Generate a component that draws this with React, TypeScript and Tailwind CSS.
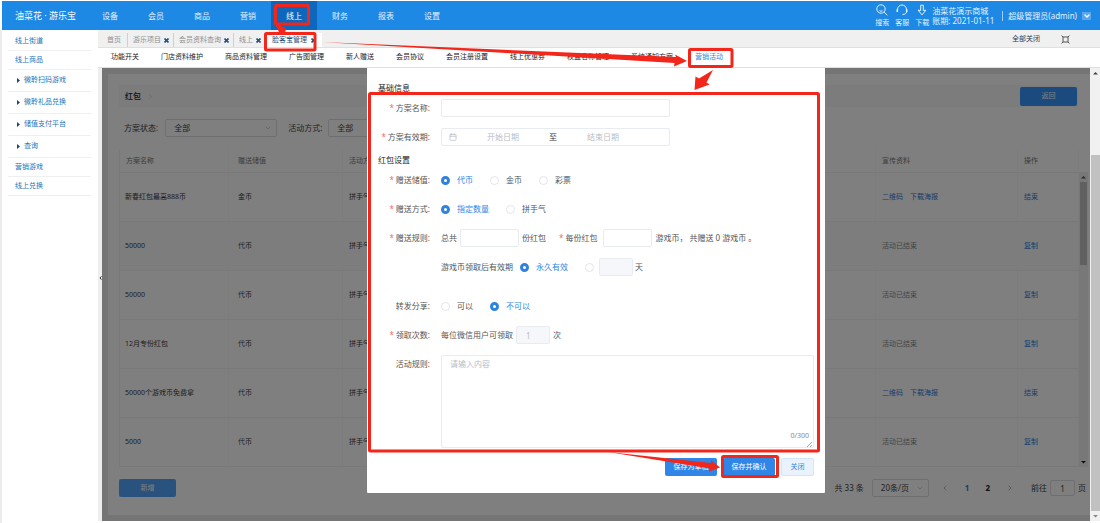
import { ReactNode } from "react";
import { ChevronDown, ChevronLeft, ChevronRight, Calendar } from "lucide-react";

const navItems = ["设备", "会员", "商品", "营销", "线上", "财务", "报表", "设置"];

const sideItems = [
  { label: "线上街道", sub: false },
  { label: "线上商品", sub: false },
  { label: "微聆扫码游戏", sub: true },
  { label: "微聆礼品兑换", sub: true },
  { label: "储值支付平台", sub: true },
  { label: "查询", sub: true },
  { label: "营销游戏", sub: false },
  { label: "线上兑换", sub: false },
];

const tabs = ["首页", "游乐项目", "会员资料查询", "线上", "脸客宝管理"];

const subNav = [
  "功能开关", "门店资料维护", "商品资料管理", "广告图管理", "新人赠送", "会员协议",
  "会员注册设置", "线上优惠券", "权益名称管理", "系统通知方案", "营销活动",
];

const rows = [
  { name: "新春红包最高888币", value: "金币", active: true },
  { name: "50000", value: "代币", active: false },
  { name: "50000", value: "代币", active: false },
  { name: "12月专份红包", value: "代币", active: false },
  { name: "50000个游戏币免费拿", value: "代币", active: true },
  { name: "5000", value: "代币", active: false },
];

function Header() {
  return (
    <header className="ml-[2px] mt-px flex h-[29px] items-stretch bg-[#1e88e5] text-[8px] text-[#e3f1fd]">
      <div className="flex w-[85px] items-center whitespace-nowrap pl-[13px] text-[9px] text-white">油菜花 · 游乐宝</div>
      <nav className="flex">
        {navItems.map((n) => (
          <a
            key={n}
            href="#"
            className={
              n === "线上"
                ? "flex w-[46px] items-center justify-center bg-[#0d68bd] text-white"
                : "flex w-[46px] items-center justify-center"
            }
          >
            {n}
          </a>
        ))}
      </nav>
      <div className="ml-auto flex items-center whitespace-nowrap pr-[9px]">
        <div className="flex gap-[6px] text-[7px] leading-[8px]">
          <a href="#" className="flex flex-col items-center gap-[3px]">
            <svg width="12" height="12" viewBox="0 0 12 12" fill="none" stroke="currentColor">
              <circle cx="5" cy="5" r="4.2" />
              <path d="M8.2 8.2 11.3 11.3M3.5 6.7Q5 7.8 6.5 6.7" />
            </svg>
            搜索
          </a>
          <a href="#" className="flex flex-col items-center gap-[3px]">
            <svg width="12" height="12" viewBox="0 0 12 12" fill="none" stroke="currentColor">
              <path d="M1.5 7.5V5.5a4.5 4.5 0 0 1 9 0v2M10.5 7.5c0 2-1.5 3-4 3" />
              <path d="M1.3 5.2v2.8M10.7 5.2v2.8" strokeWidth="1.6" />
            </svg>
            客服
          </a>
          <a href="#" className="flex flex-col items-center gap-[3px]">
            <svg width="12" height="12" viewBox="0 0 12 12" fill="none" stroke="currentColor" strokeLinejoin="round">
              <path d="M4.7 1.2h2.6v5.3l2.6-.3L6 10.9 2.1 6.2l2.6.3z" />
            </svg>
            下载
          </a>
        </div>
        <div className="ml-[3px] text-[8px] leading-[10px]">
          <div>油菜花演示商城</div>
          <div>账期: 2021-01-11</div>
        </div>
        <div className="ml-[8px] h-[10px] w-px bg-[#9fcdf6]" />
        <div className="ml-[5px]">超级管理员(admin)</div>
        <button aria-label="账户菜单" className="ml-[5px] flex h-[8px] w-[9px] items-center justify-center bg-[#56a7ee] text-white">
          <ChevronDown size={8} strokeWidth={4} />
        </button>
      </div>
    </header>
  );
}

function Sidebar() {
  return (
    <aside className="w-[98px] shrink-0 border-l-2 border-[#ececec] bg-white pl-[6px] pr-[7px] pt-[2px]">
      <ul className="text-[7px] text-[#1b74b8]">
        {sideItems.map((s) => (
          <li key={s.label} className="border-b border-[#efefef]">
            <a href="#" className={s.sub ? "flex h-[21px] items-center gap-[4px] pl-[9px]" : "flex h-[18px] items-center pl-[7px]"}>
              {s.sub && (
                <svg width="3" height="5" viewBox="0 0 3 5" fill="#174a7a">
                  <path d="M0 0 3 2.5 0 5z" />
                </svg>
              )}
              {s.label}
            </a>
          </li>
        ))}
      </ul>
    </aside>
  );
}

function TabBar() {
  return (
    <div className="flex h-[18px] items-end border-b border-[#e0e0e0] bg-[#f0f0f0] pl-[3px] text-[7px] text-[#8f8f8f]">
      {tabs.map((t, i) => (
        <div
          key={t}
          className={
            i === tabs.length - 1
              ? "flex h-[14px] items-center gap-[4px] bg-white px-[6px] text-[#1f4e79]"
              : i === 0
                ? "flex h-[14px] items-center border-r border-[#cfcfcf] px-[6px]"
                : "flex h-[14px] items-center gap-[3px] border-r border-[#cfcfcf] pl-[5px] pr-[4px]"
          }
        >
          <a href="#">{t}</a>
          {i > 0 && (
            <button aria-label={"关闭" + t} className="text-[#24507c]">
              <svg width="5" height="5" viewBox="0 0 5 5" stroke="currentColor" strokeWidth="1.6">
                <path d="M.5.5l4 4M4.5.5l-4 4" />
              </svg>
            </button>
          )}
        </div>
      ))}
      <div className="ml-auto flex h-[16px] items-center gap-[21px] pr-[30px]">
        <button className="text-[#1d3c5a]">全部关闭</button>
        <button aria-label="全屏" className="text-[#555]">
          <svg width="9" height="9" viewBox="0 0 9 9" fill="none" stroke="currentColor">
            <rect x="2" y="2" width="5" height="5" />
            <path d="M.5.5l1.500 1.500M8.500.5 7 2M.5 8.500 2 7M8.500 8.500 7 7" />
          </svg>
        </button>
      </div>
    </div>
  );
}

function PageSelect({ id, value, className }: { id: string; value: string; className: string }) {
  return (
    <span className={"relative flex h-[18px] " + className}>
      <select id={id} aria-label={id} className="w-full appearance-none rounded-[2px] border border-[#dcdee2] bg-transparent pl-[8px] text-[#444]">
        <option>{value}</option>
      </select>
      <ChevronDown size={8} className="pointer-events-none absolute right-[5px] top-[5px] text-[#bbb]" />
    </span>
  );
}

function PlanPage() {
  const th = "border-r border-b border-r-[#f8f8f8] border-b-[#f2f2f2] px-[6px] text-left font-normal";
  const td = "border-r border-b border-r-[#f8f8f8] border-b-[#f2f2f2]";
  return (
    <div className="bg-[#ebebeb] py-[6px] pl-[6px]">
      <div className="bg-white pb-[18px] pl-[11px] pr-[2px] pt-[11px]">
        <div className="mr-[10px] flex h-[22px] items-center bg-[#f8f8f8] pl-[6px] pr-px">
          <h1 className="text-[8px] font-medium text-[#222]">红包</h1>
          <ChevronRight size={7} className="ml-[6px] text-[#bbb]" />
          <button className="ml-auto h-[19px] w-[57px] rounded-[2px] bg-[#3694ff] text-[7px] text-white">返回</button>
        </div>
        <div className="mt-[12px] flex items-center pl-[5px] text-[8px] text-[#444]">
          <label htmlFor="方案状态">方案状态:</label>
          <PageSelect id="方案状态" value="全部" className="ml-[7px] w-[112px]" />
          <label htmlFor="活动方式" className="ml-[11px]">活动方式:</label>
          <PageSelect id="活动方式" value="全部" className="ml-[6px] w-[112px]" />
        </div>
        <div className="mt-[13px] flex">
          <table className="w-full flex-1 table-fixed border-separate border-spacing-0 border-l border-[#f2f2f2] text-[7px] text-[#3c3c3c]">
            <thead>
              <tr className="h-[23px] text-[#777]">
                <th className={th + " w-[109px]"}>方案名称</th>
                <th className={th + " w-[114px] pl-[9px]"}>赠送储值</th>
                <th className={th}>活动方式</th>
                <th className={th + " w-[142px]"}>宣传资料</th>
                <th className={th + " w-[61px]"}>操作</th>
              </tr>
            </thead>
            <tbody>
              {rows.map((r, i) => (
                <tr key={i} className={i === 1 ? "h-[49px] bg-[#fafafa]" : "h-[49px]"}>
                  <td className={td + " px-[5px]"}>{r.name}</td>
                  <td className={td + " px-[9px]"}>{r.value}</td>
                  <td className={td + " px-[6px]"}>拼手气</td>
                  <td className={td + " px-[6px]"}>
                    {r.active ? (
                      <span className="flex gap-[7px] text-[#2d7cd6]">
                        <a href="#">二维码</a>
                        <a href="#">下载海报</a>
                      </span>
                    ) : (
                      <span className="text-[#8a8a8a]">活动已结束</span>
                    )}
                  </td>
                  <td className={td + " px-[6px] text-[#2d7cd6]"}>
                    <a href="#">{r.active ? "结束" : "复制"}</a>
                  </td>
                </tr>
              ))}
            </tbody>
          </table>
          <div className="mt-[22px] flex w-[9px] flex-col items-center justify-between bg-[#f1f1f1]">
            <div className="flex w-full flex-col items-center">
              <svg width="5" height="10" viewBox="0 0 5 10" fill="#555"><path d="M0 6.500 2.500 4 5 6.500z" /></svg>
              <div className="h-[83px] w-[7px] bg-[#c1c1c1]" />
            </div>
            <svg width="5" height="10" viewBox="0 0 5 10" fill="#222"><path d="M0 4h5L2.500 6.500z" /></svg>
          </div>
        </div>
        <div className="mt-[12px] flex h-[18px] items-center text-[8px] text-[#444]">
          <button className="h-[18px] w-[57px] rounded-[2px] bg-[#54a4fc] text-[7px] text-white">新增</button>
          <span className="ml-auto">共 33 条</span>
          <PageSelect id="每页条数" value="20条/页" className="ml-[8px] w-[57px]" />
          <button aria-label="上一页" className="ml-[12px] text-[#999]"><ChevronLeft size={8} /></button>
          <button className="ml-[16px] font-bold text-[#2d7cd6]">1</button>
          <button className="ml-[16px] font-bold text-[#222]">2</button>
          <button aria-label="下一页" className="ml-[16px] text-[#888]"><ChevronRight size={8} /></button>
          <label htmlFor="goto" className="ml-[17px]">前往</label>
          <input id="goto" defaultValue="1" className="mx-[3px] h-[16px] w-[25px] rounded-[2px] border border-[#dcdee2] text-center" />
          <span className="mr-[2px]">页</span>
        </div>
      </div>
    </div>
  );
}

function Field({ label, required, htmlFor, children }: { label: string; required?: boolean; htmlFor?: string; children: ReactNode }) {
  return (
    <div className="flex">
      <label htmlFor={htmlFor} className="flex h-[18px] w-[52px] shrink-0 items-center justify-end">
        {required && <span className="mr-[2px] text-[#f56c6c]">*</span>}
        {label}:
      </label>
      <div className="ml-[11px] flex min-h-[18px] flex-1 items-center">{children}</div>
    </div>
  );
}

function Radio({ name, label, checked, bare }: { name: string; label: string; checked?: boolean; bare?: boolean }) {
  return (
    <label className={bare ? "flex items-center" : "mr-[17px] flex items-center gap-[7px]"}>
      <input
        type="radio"
        name={name}
        aria-label={label}
        defaultChecked={checked}
        className="h-[9px] w-[9px] appearance-none rounded-full border border-[#e2e5ea] bg-white checked:border-[3px] checked:border-[#2f82dd]"
      />
      {!bare && <span className={checked ? "text-[#2f86e6]" : ""}>{label}</span>}
    </label>
  );
}

const box = "h-[18px] rounded-[2px] border border-[#e8ebef] bg-white";

function PlanDialog() {
  return (
    <div role="dialog" aria-label="红包" className="w-[458px] rounded-b-[1px] bg-white px-[11px] pb-[17px] pt-[15px] text-[8px] text-[#555]">
      <form onSubmit={(e) => e.preventDefault()}>
        <h2 className="h-[10px] text-[8px] leading-[10px] text-[#222]">基础信息</h2>
        <div className="mt-[6px] flex flex-col gap-[11px]">
          <Field label="方案名称" required htmlFor="plan">
            <input id="plan" className={box + " w-[229px] px-[8px]"} />
          </Field>
          <Field label="方案有效期" required htmlFor="start">
            <div className={box + " flex w-[229px] items-center pl-[7px]"}>
              <Calendar size={8} className="text-[#b4b9c2]" />
              <input id="start" placeholder="开始日期" className="w-[92px] text-center outline-none placeholder:text-[#b9bdc6]" />
              <span className="text-[#333]">至</span>
              <input aria-label="结束日期" placeholder="结束日期" className="w-[92px] text-center outline-none placeholder:text-[#b9bdc6]" />
            </div>
          </Field>
        </div>
        <h2 className="mt-[9px] h-[10px] text-[8px] leading-[10px] text-[#222]">红包设置</h2>
        <div className="mt-[6px] flex flex-col gap-[11px]">
          <Field label="赠送储值" required>
            <Radio name="store" label="代币" checked />
            <Radio name="store" label="金币" />
            <Radio name="store" label="彩票" />
          </Field>
          <Field label="赠送方式" required>
            <Radio name="mode" label="指定数量" checked />
            <Radio name="mode" label="拼手气" />
          </Field>
          <Field label="赠送规则" required htmlFor="total">
            <span>总共</span>
            <input id="total" className={box + " mx-[3px] w-[59px] px-[4px]"} />
            <span>份红包</span>
            <label htmlFor="each" className="ml-[13px]">
              <span className="mr-[2px] text-[#f56c6c]">*</span>每份红包
            </label>
            <input id="each" className={box + " ml-[6px] mr-[3px] w-[49px] px-[4px]"} />
            <span className="whitespace-nowrap">游戏币， 共赠送 0 游戏币 。</span>
          </Field>
          <div className="ml-[63px] flex h-[18px] items-center">
            <span className="mr-[7px]">游戏币领取后有效期</span>
            <Radio name="valid" label="永久有效" checked />
            <Radio name="valid" label="指定天数" bare />
            <input aria-label="天数" disabled className="ml-[5px] mr-[2px] h-[18px] w-[34px] rounded-[2px] border border-[#e8ebef] bg-[#f5f7fa]" />
            <span>天</span>
          </div>
        </div>
        <div className="mt-[21px] flex flex-col gap-[11px]">
          <Field label="转发分享">
            <Radio name="share" label="可以" />
            <Radio name="share" label="不可以" checked />
          </Field>
          <Field label="领取次数" required htmlFor="times">
            <span>每位微信用户可领取</span>
            <input id="times" disabled defaultValue="1" className="mx-[3px] h-[18px] w-[34px] rounded-[2px] border border-[#e8ebef] bg-[#f5f7fa] pl-[9px] text-[#b9bdc6]" />
            <span>次</span>
          </Field>
          <Field label="活动规则" htmlFor="rules">
            <div className="relative flex w-full">
              <textarea
                id="rules"
                placeholder="请输入内容"
                className="h-[93px] w-full resize-none rounded-[2px] border border-[#e8ebef] px-[8px] py-[2px] placeholder:text-[#b9bdc6]"
              />
              <span className="absolute bottom-[7px] right-[5px] text-[7px] text-[#888]">0/300</span>
              <svg className="absolute bottom-[1px] right-[2px]" width="5" height="5" viewBox="0 0 5 5" stroke="#777" strokeWidth=".7">
                <path d="M0 5 5 0M3 5l2-2" />
              </svg>
            </div>
          </Field>
        </div>
        <div className="mt-[10px] flex justify-end gap-[6px] text-[7px] text-white">
          <button className="h-[18px] w-[52px] rounded-[2px] bg-[#2f86e6]">保存为草稿</button>
          <button className="h-[18px] w-[52px] rounded-[2px] bg-[#2f86e6]">保存并确认</button>
          <button className="h-[18px] w-[33px] rounded-[2px] border border-[#d3e5fa] bg-[#eaf3fd] text-[#2f86e6]">关闭</button>
        </div>
      </form>
    </div>
  );
}

function Annotations() {
  return (
    <svg className="pointer-events-none absolute left-0 top-0" width="1100" height="523" viewBox="0 0 1100 523" fill="none">
      <g stroke="#f2261b" strokeWidth="3" strokeLinejoin="round">
        <rect x="275.500" y="5.500" width="33" height="18.500" rx="1" />
        <rect x="265.500" y="33.500" width="49.500" height="16.500" rx="1" />
        <rect x="689.500" y="49.500" width="42.500" height="17" rx="1" />
        <rect x="369.500" y="93.500" width="449" height="357.500" rx="1" />
        <rect x="722.500" y="456.500" width="55" height="20" rx="1" />
      </g>
      <g fill="#f2261b">
        <path d="M275 24 279 24 286 29 285 33 279 32z" />
        <path d="M321 42 676 57 675 54.500 687 61 674 66.500 674.500 63z" />
        <path d="M713 70 706.500 82.500 709.500 84.500 694.500 90 695.500 76.500 699 78.500z" />
        <path d="M608 452 711 463 711 460 720 467.500 709 471.500 709.500 468.500z" />
      </g>
    </svg>
  );
}

export default function App() {
  return (
    <div className="relative flex min-h-screen flex-col bg-white font-['Noto_Sans','Noto_Sans_CJK_SC',sans-serif]">
      <Header />
      <div className="flex flex-1">
        <Sidebar />
        <div className="min-w-0 flex-1">
          <TabBar />
          <nav className="flex h-[20px] items-center gap-[22px] whitespace-nowrap border-b border-[#dedede] bg-white pl-[13px] text-[7px] text-[#222]">
            {subNav.map((s) => (
              <a
                key={s}
                href="#"
                className={s === "营销活动" ? "flex h-[20px] items-center border-b border-[#2f86e6] text-[#2f86e6]" : ""}
              >
                {s}
              </a>
            ))}
          </nav>
          <div className="flex">
            <button aria-label="收起菜单" className="flex w-[4px] items-center justify-center bg-[#eeeeee]">
              <svg className="mb-[34px] shrink-0" width="3" height="4" viewBox="0 0 3 4" fill="none" stroke="#333">
                <path d="M2.500.3 1 2l1.500 1.700" />
              </svg>
            </button>
            <main className="relative min-w-0 flex-1">
              <PlanPage />
              <div className="absolute inset-0 flex items-start justify-center bg-black/50">
                <PlanDialog />
              </div>
            </main>
            <div className="flex w-[10px] flex-col items-center bg-[#f1f1f1]">
              <svg width="5" height="10" viewBox="0 0 5 10" fill="#444"><path d="M0 6.500 2.500 4 5 6.500z" /></svg>
              <div className="mt-[77px] w-[9px] flex-1 bg-[#c1c1c1]" />
              <svg width="5" height="10" viewBox="0 0 5 10" fill="#888"><path d="M0 4h5L2.500 6.500z" /></svg>
            </div>
          </div>
        </div>
      </div>
      <Annotations />
    </div>
  );
}
